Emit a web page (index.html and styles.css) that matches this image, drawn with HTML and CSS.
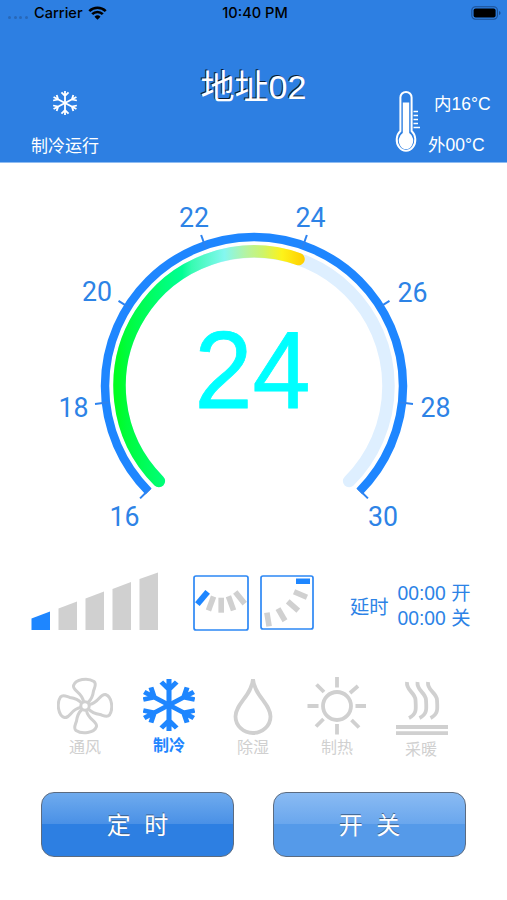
FILE: index.html
```html
<!DOCTYPE html>
<html lang="zh-CN">
<head>
    <meta charset="UTF-8">
    <meta name="viewport" content="width=device-width, initial-scale=1.0">
    <title>地址02</title>
    <link rel="stylesheet" href="styles.css">
</head>
<body>
    <svg class="defs" width="0" height="0">
        <symbol id="snow" viewBox="0 0 52 52">
            <g transform="translate(26 26) scale(1.1 1)">
                <path id="arm" d="M0 0V-26M0 -15.500l-7 -7.500M0 -15.500l7 -7.500"/>
                <use href="#arm" transform="rotate(60)"/>
                <use href="#arm" transform="rotate(120)"/>
                <use href="#arm" transform="rotate(180)"/>
                <use href="#arm" transform="rotate(240)"/>
                <use href="#arm" transform="rotate(300)"/>
            </g>
        </symbol>
    </svg>

    <header class="header">
        <div class="status-bar">
            <div class="carrier">
                <span class="dots"><i></i><i></i><i></i><i></i></span>
                <span class="carrier-name">Carrier</span>
                <svg class="wifi" width="19" height="14" viewBox="0 0 19 14">
                    <path d="M1.300 5.100a11.600 11.600 0 0 1 16.400 0M4.200 8.200a7.500 7.500 0 0 1 10.600 0" fill="none" stroke="#000" stroke-width="2.600"/>
                    <path d="M9.500 13.800l-3-3.100a4.300 4.300 0 0 1 6 0z"/>
                </svg>
            </div>
            <div class="clock">10:40 PM</div>
            <svg class="battery" width="31" height="14" viewBox="0 0 31 14">
                <rect x=".8" y=".8" width="25.600" height="12.400" rx="3.600" fill="none" stroke="#1c4f91" stroke-width="1.100"/>
                <rect x="2.600" y="2.500" width="22" height="9" rx="2"/>
                <path d="M28 5v4q1.600-.6 1.600-2T28 5z" fill="#1c4f91"/>
            </svg>
        </div>
        <div class="header-main">
            <div class="run-state">
                <svg class="snow-small" width="24" height="24"><use href="#snow"/></svg>
                <span>制冷运行</span>
            </div>
            <h1>地址02</h1>
            <div class="temps">
                <svg width="26" height="64" viewBox="0 0 26 64">
                    <path d="M5.400 41V7.500a5.400 5.400 0 0 1 11.200 0V41a9.300 11 0 1 1-11.200 0z" fill="#2d7fe2" stroke="#fff" stroke-width="2"/>
                    <path d="M7.800 12.500h6.400v30.500a7.200 8.500 0 1 1-6.400 0z" fill="#fff"/>
                    <path d="M18.500 21.500h4.500M18.500 25.500h4.500M18.500 29.500h4.500M18.500 33.500h4.500M18.500 37.500h6.500" stroke="#fff" stroke-width="1.400"/>
                </svg>
                <div class="temp-values">
                    <span class="temp-in">内16°C</span>
                    <span>外00°C</span>
                </div>
            </div>
        </div>
    </header>

    <main>
        <svg class="gauge" width="507" height="380" viewBox="0 163 507 380">
            <defs>
                <linearGradient id="heat" gradientUnits="userSpaceOnUse" x1="113" y1="0" x2="305" y2="0">
                    <stop offset="0" stop-color="#00ff18"/>
                    <stop offset=".07" stop-color="#00fc3c"/>
                    <stop offset=".36" stop-color="#00ff94"/>
                    <stop offset=".41" stop-color="#38fbb2"/>
                    <stop offset=".58" stop-color="#84f7f0"/>
                    <stop offset=".7" stop-color="#b8f39c"/>
                    <stop offset=".78" stop-color="#cdf46b"/>
                    <stop offset=".88" stop-color="#fdf31a"/>
                    <stop offset="1" stop-color="#ffcc00"/>
                </linearGradient>
            </defs>
            <path class="ring" d="M148.600 491.400A149 149 0 1 1 359.400 491.400"/>
            <path class="track" d="M158.900 481.100A134.500 134.500 0 1 1 349.100 481.100"/>
            <path class="level" d="M158.900 481.100A134.500 134.500 0 0 1 298.500 259.100"/>
            <g class="ticks">
                <path d="M254 240V226" transform="rotate(-134.600 254 386)"/>
                <path d="M254 240V226" transform="rotate(-96.430 254 386)"/>
                <path d="M254 240V226" transform="rotate(-57.860 254 386)"/>
                <path d="M254 240V226" transform="rotate(-19.290 254 386)"/>
                <path d="M254 240V226" transform="rotate(19.290 254 386)"/>
                <path d="M254 240V226" transform="rotate(57.860 254 386)"/>
                <path d="M254 240V226" transform="rotate(96.430 254 386)"/>
                <path d="M254 240V226" transform="rotate(134.600 254 386)"/>
            </g>
            <g class="labels">
                <text x="124.500" y="526" textLength="30" lengthAdjust="spacingAndGlyphs">16</text>
                <text x="73.500" y="417" textLength="30" lengthAdjust="spacingAndGlyphs">18</text>
                <text x="97" y="301" textLength="30" lengthAdjust="spacingAndGlyphs">20</text>
                <text x="194" y="226.500" textLength="30" lengthAdjust="spacingAndGlyphs">22</text>
                <text x="310.500" y="226.500" textLength="30" lengthAdjust="spacingAndGlyphs">24</text>
                <text x="412.500" y="301.500" textLength="30" lengthAdjust="spacingAndGlyphs">26</text>
                <text x="435.500" y="417" textLength="30" lengthAdjust="spacingAndGlyphs">28</text>
                <text x="383" y="526" textLength="30" lengthAdjust="spacingAndGlyphs">30</text>
            </g>
            <text class="value" x="252.500" y="408" textLength="116" lengthAdjust="spacingAndGlyphs">24</text>
        </svg>

        <section class="settings">
            <svg class="fan-speed" width="128" height="59" viewBox="0 0 128 59">
                <path class="on" d="M0.500 46.500L19 39.500V58H0.500z"/>
                <path d="M27.500 36.500L46 29.500V58H27.500z"/>
                <path d="M54.500 26.500L73 19.500V58H54.500z"/>
                <path d="M81.500 17L100 10V58H81.500z"/>
                <path d="M108.500 7L127 0.500V58H108.500z"/>
            </svg>
            <svg class="swing" width="56" height="56" viewBox="0 0 56 56">
                <rect class="frame" x="1" y="1" width="54" height="54" rx="2"/>
                <rect class="on" x="-3" y="-8" width="6" height="16" transform="translate(9.500 23) rotate(40)"/>
                <rect x="-2.800" y="-7.500" width="5.600" height="15" transform="translate(18 28.500) rotate(20)"/>
                <rect x="-2.800" y="-7.500" width="5.600" height="15" transform="translate(28.200 30.200)"/>
                <rect x="-2.800" y="-7.500" width="5.600" height="15" transform="translate(38 28.300) rotate(-20)"/>
                <rect x="-2.800" y="-7.500" width="5.600" height="15" transform="translate(47 22.800) rotate(-39)"/>
            </svg>
            <svg class="swing" width="54" height="55" viewBox="0 0 54 55">
                <rect class="frame" x="1" y="1" width="52" height="53" rx="2"/>
                <rect class="on" x="36" y="3.500" width="14" height="5.500"/>
                <rect x="-2.800" y="-7" width="5.600" height="14" transform="translate(40.500 19.500) rotate(-67)"/>
                <rect x="-2.800" y="-7" width="5.600" height="14" transform="translate(33 31) rotate(-49)"/>
                <rect x="-2.800" y="-7" width="5.600" height="14" transform="translate(21.500 39.700) rotate(-30)"/>
                <rect x="-2.800" y="-7" width="5.600" height="14" transform="translate(8 44.500) rotate(-9)"/>
            </svg>
            <div class="delay">
                <span class="delay-label">延时</span>
                <div class="delay-times">
                    <span>00:00 开</span>
                    <span>00:00 关</span>
                </div>
            </div>
        </section>

        <section class="modes">
            <div class="mode">
                <svg class="fan" width="56" height="58" viewBox="-28 -29 56 58">
                    <circle r="4.200"/>
                    <path id="blade" d="M-1.500 -4.500C-3 -14 -12.500 -15 -11.500 -20.500C-9.500 -27 3 -28.500 9 -24.500C12 -22 9.500 -18.500 8.500 -15C8 -11 7 -7 3 -3.500"/>
                    <use href="#blade" transform="rotate(90)"/>
                    <use href="#blade" transform="rotate(180)"/>
                    <use href="#blade" transform="rotate(270)"/>
                </svg>
                <span>通风</span>
            </div>
            <div class="mode active">
                <svg class="snow-big" width="56" height="60" viewBox="-2 -3 56 60"><use href="#snow" width="52" height="52"/></svg>
                <span>制冷</span>
            </div>
            <div class="mode">
                <svg width="56" height="60" viewBox="0 0 56 60">
                    <path d="M28 3C27 19 10.500 28 10.500 40.500A17.500 16.500 0 0 0 45.500 40.500C45.500 28 29 19 28 3z"/>
                </svg>
                <span>除湿</span>
            </div>
            <div class="mode">
                <svg width="60" height="60" viewBox="-30 -30 60 60">
                    <circle r="14"/>
                    <path d="M0 -18.500V-29M0 18V28.500M-18.500 0H-29.500M18.500 0H29M-13 -14L-20.500 -21.500M13 -13L21 -20M-13.500 13L-21 20.500M14.500 14L22 21.500"/>
                </svg>
                <span>制热</span>
            </div>
            <div class="mode heating">
                <svg width="56" height="60" viewBox="0 0 56 60">
                    <path d="M2 51H54M2 57.200H54"/>
                    <path d="M13 6C12 15 21 16 21.500 24C22 33 23 38 15 42M23.500 6C22.500 15 31.500 16 32 24C32.500 33 33.500 38 25.500 42M34 6C33 15 42.500 16 43 24C43.500 33 44.500 38 36.500 42"/>
                </svg>
                <span class="low">采暖</span>
            </div>
        </section>

        <section class="buttons">
            <button class="btn">定 时</button>
            <button class="btn light">开 关</button>
        </section>
    </main>
</body>
</html>
```

FILE: styles.css
```css
* {
    box-sizing: border-box;
}
body {
    margin: 0;
    width: 507px;
    height: 900px;
    overflow: hidden;
    background: #fff;
    font-family: "Liberation Sans", "Noto Sans CJK SC", sans-serif;
}
svg {
    display: block;
    flex: none;
}
.defs {
    height: 0;
}

/* header */
.header {
    height: 163px;
    background: #2d7fe2;
    border-bottom: 1px solid #8fbcf2;
    color: #fff;
}
.status-bar {
    display: grid;
    grid-template-columns: 1fr auto 1fr;
    align-items: center;
    height: 26px;
    padding: 0 5px 0 8px;
    color: #000;
    font: 500 14.6px Inter, sans-serif;
}
.carrier {
    display: flex;
    align-items: center;
}
.dots {
    display: flex;
    gap: 2.5px;
    width: 26px;
    padding-top: 8px;
}
.dots i {
    width: 3px;
    height: 3px;
    border-radius: 50%;
    background: #2868b8;
}
.wifi {
    margin-left: 5px;
}
.battery {
    justify-self: end;
}
.header-main {
    display: grid;
    grid-template-columns: 130px 1fr 130px;
    height: 136px;
}
.run-state {
    display: flex;
    flex-direction: column;
    align-items: center;
    padding-top: 65px;
    font-size: 17px;
    line-height: 24px;
}
.run-state span {
    margin-top: 20px;
}
.snow-small {
    fill: none;
    stroke: #fff;
    stroke-width: 3.6;
}
h1 {
    margin: 38px 0 0;
    text-align: center;
    font-size: 34px;
    line-height: 46px;
    font-weight: 400;
    text-shadow: -1px -1px 0 #0a1c33;
}
.temps {
    display: flex;
    padding-top: 64px;
    margin-left: 18px;
}
.temp-values {
    display: flex;
    flex-direction: column;
    gap: 17px;
    padding: 2px 0 0 7px;
    font-size: 17.5px;
    line-height: 24px;
    white-space: nowrap;
}
.temp-in {
    margin-left: 6px;
}

/* gauge */
.ring, .track, .level {
    fill: none;
}
.ring {
    stroke: #1e86ff;
    stroke-width: 8.5;
}
.track {
    stroke: #deefff;
    stroke-width: 12.5;
    stroke-linecap: round;
}
.level {
    stroke: url(#heat);
    stroke-width: 12.5;
    stroke-linecap: round;
}
.ticks {
    stroke: #2d83f0;
    stroke-width: 2;
}
.labels {
    font: 28px Roboto, sans-serif;
    fill: #2d83e6;
    text-anchor: middle;
}
.value {
    font-size: 110px;
    fill: #00ffff;
    stroke: #00ffff;
    stroke-width: 0.8;
    text-anchor: middle;
}

/* fan speed, swing, delay */
.settings {
    display: flex;
    height: 88px;
    padding: 29px 0 0 31px;
    fill: #d0d0d0;
}
.settings .on {
    fill: #1e86ff;
}
.swing {
    margin: 3px 0 0 34px;
}
.swing + .swing {
    margin-left: 11px;
}
.frame {
    fill: none;
    stroke: #2d88f5;
    stroke-width: 1.7;
}
.delay {
    display: flex;
    align-items: center;
    gap: 9px;
    height: 50px;
    margin: 9px 0 0 36px;
    color: #2d83e6;
    font-size: 19.3px;
    white-space: nowrap;
}
.delay-times {
    display: flex;
    flex-direction: column;
    line-height: 25px;
}

/* modes */
.modes {
    display: grid;
    grid-template-columns: repeat(5, 84px);
    height: 146px;
    padding: 45px 0 0 43px;
}
.mode {
    display: flex;
    flex-direction: column;
    align-items: center;
    color: #d0d0d0;
    font: 16px/20px "Noto Sans CJK SC", sans-serif;
}
.mode svg {
    height: 60px;
    fill: none;
    stroke: #d0d0d0;
    stroke-width: 3.8;
}
.mode .fan {
    stroke-width: 3;
}
.mode .snow-big {
    stroke: #1e86ff;
    stroke-width: 4.6;
}
.active {
    color: #1e86ff;
    font-weight: 700;
}
.active span {
    margin-top: -2px;
}
.heating svg {
    margin-left: 2px;
}
.low {
    margin-top: 2px;
}

/* buttons */
.buttons {
    display: flex;
    gap: 39px;
    padding: 15px 0 0 41px;
}
.btn {
    width: 193px;
    height: 65px;
    padding: 0 0 2px;
    border: 1.5px solid #5b6b80;
    border-radius: 13px;
    background: linear-gradient(#6fabee, #4990e6 50%, #2d7fe2 50%, #2d7fe2);
    color: #fff;
    font: 24px "Noto Sans CJK SC", sans-serif;
    word-spacing: 8px;
    text-shadow: 0 -1px 0 #3c5f8c;
}
.light {
    background: linear-gradient(#8abbf3, #69a6ed 50%, #559ae9 50%, #559ae9);
}
```
